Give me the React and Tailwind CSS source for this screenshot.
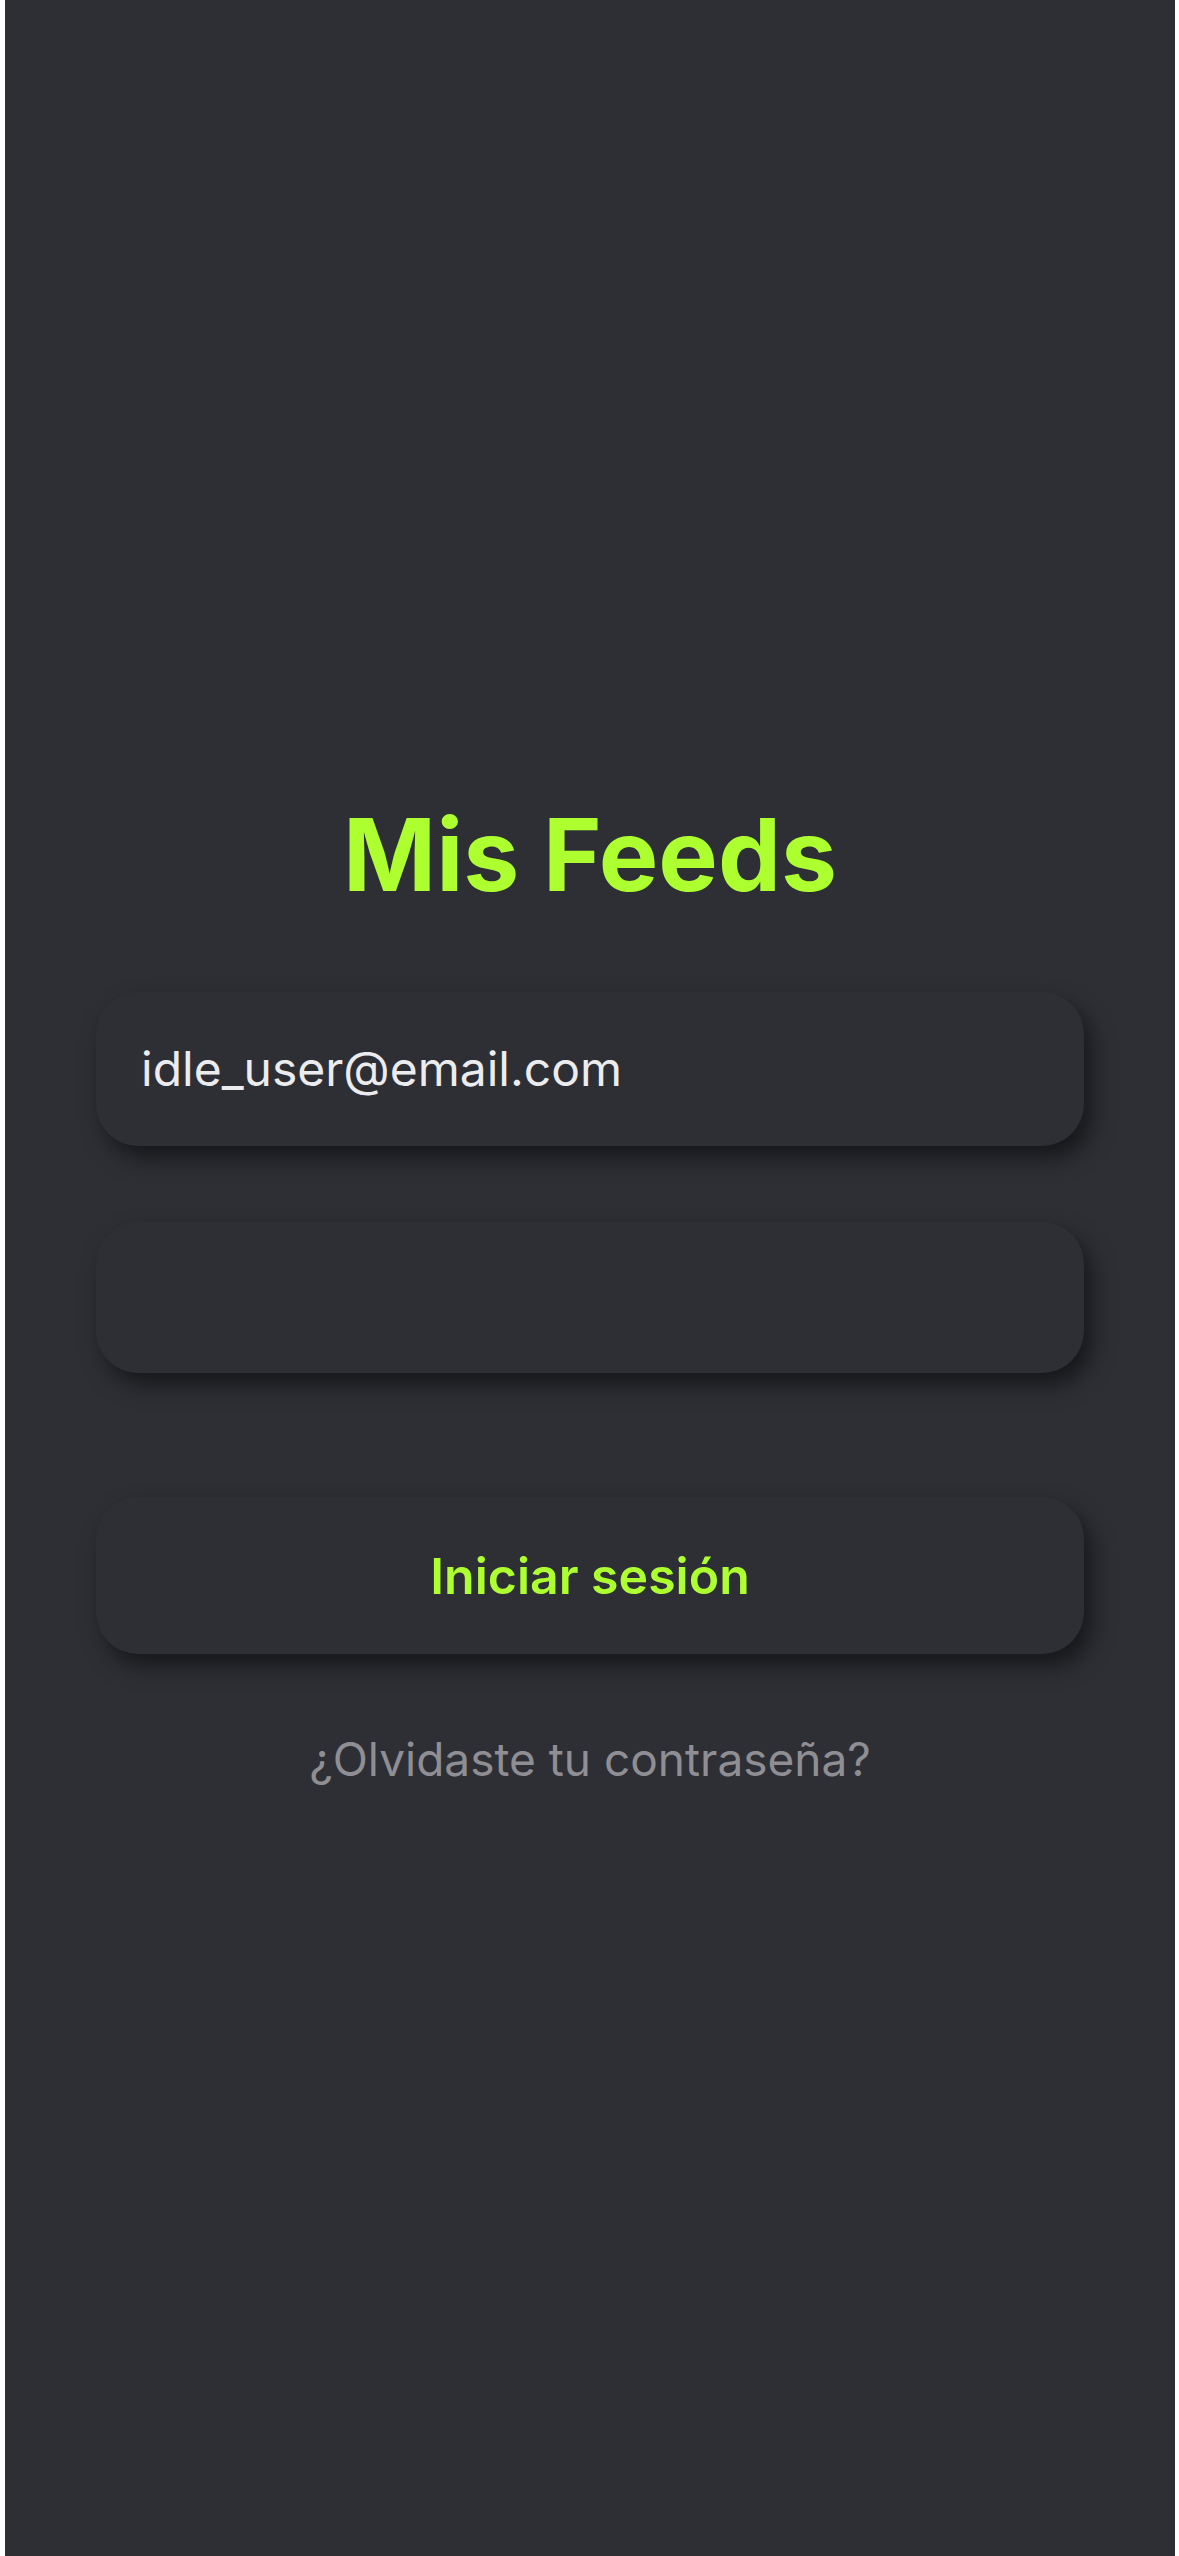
export default function App() {
  const font = { fontFamily: 'Inter, "Noto Sans", sans-serif' };
  return (
    <div className="w-[1179px] h-[2556px] bg-white flex" style={font}>
      <div className="ml-[5px] mr-[4px] flex-1 h-full bg-[#2e2f35] flex flex-col items-center pt-[805px]">
        <h1 className="text-[100px] leading-[100px] font-bold text-[#adff2f] tracking-[0px]">Mis Feeds</h1>
        <div className="mt-[87px] w-[988px] h-[154px] rounded-[42px] bg-[#2e2f35] shadow-[8px_12px_22px_rgba(0,0,0,0.5)] flex items-center pl-[45px]">
          <span className="text-[48px] leading-none text-[#ececee]">idle_user@email.com</span>
        </div>
        <div className="mt-[76px] w-[988px] h-[151px] rounded-[42px] bg-[#2e2f35] shadow-[8px_12px_22px_rgba(0,0,0,0.5)]" />
        <button className="mt-[124px] w-[988px] h-[157px] rounded-[42px] bg-[#2e2f35] shadow-[8px_12px_22px_rgba(0,0,0,0.5)] flex items-center justify-center">
          <span className="text-[50px] leading-none font-semibold text-[#adff2f]">Iniciar sesión</span>
        </button>
        <p className="mt-[82px] text-[46px] leading-[46px] text-[#8e8e93]">¿Olvidaste tu contraseña?</p>
      </div>
    </div>
  );
}
